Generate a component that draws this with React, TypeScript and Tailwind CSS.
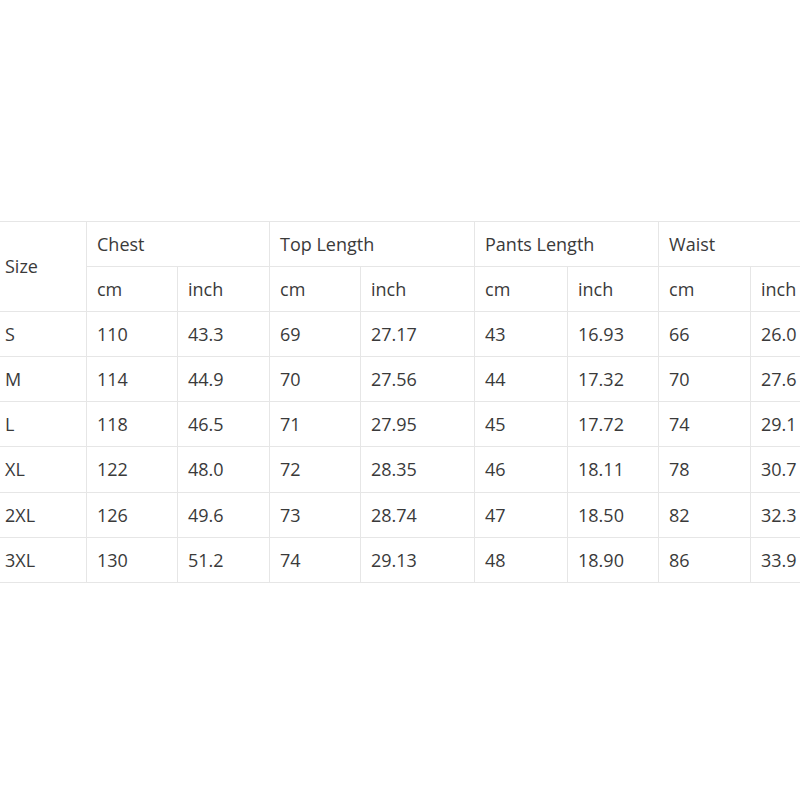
const GROUPS = ["Chest", "Top Length", "Pants Length", "Waist"];

const ROWS: string[][] = [
  ["S", "110", "43.3", "69", "27.17", "43", "16.93", "66", "26.0"],
  ["M", "114", "44.9", "70", "27.56", "44", "17.32", "70", "27.6"],
  ["L", "118", "46.5", "71", "27.95", "45", "17.72", "74", "29.1"],
  ["XL", "122", "48.0", "72", "28.35", "46", "18.11", "78", "30.7"],
  ["2XL", "126", "49.6", "73", "28.74", "47", "18.50", "82", "32.3"],
  ["3XL", "130", "51.2", "74", "29.13", "48", "18.90", "86", "33.9"],
];

const WIDTHS = [86, 91, 92, 91, 114, 93, 91, 92, 92];

export default function App() {
  const cell = "border border-[#e6e6e6] align-middle text-left";

  return (
    <div className="w-[800px] h-[800px] overflow-hidden bg-white pt-[221px] font-['Open_Sans',sans-serif] text-[18px] text-[#3a3a3a]">
      <table className="table-fixed border-collapse w-[842px] -ml-px">
        <colgroup>
          {WIDTHS.map((w, i) => (
            <col key={i} style={{ width: w + (i === 0 ? 1 : 0) }} />
          ))}
        </colgroup>
        <thead>
          <tr className="h-[45px]">
            <th rowSpan={2} className={`${cell} font-normal pl-[5px]`}>Size</th>
            {GROUPS.map(g => (
              <th key={g} colSpan={2} className={`${cell} font-normal pl-[10px]`}>{g}</th>
            ))}
          </tr>
          <tr className="h-[45px]">
            {GROUPS.flatMap(g => [
              <th key={g + "cm"} className={`${cell} font-normal pl-[10px]`}>cm</th>,
              <th key={g + "in"} className={`${cell} font-normal pl-[10px]`}>inch</th>,
            ])}
          </tr>
        </thead>
        <tbody>
          {ROWS.map(row => (
            <tr key={row[0]} className={row[0] === "XL" ? "h-[46px]" : "h-[45px]"}>
              {row.map((v, i) => (
                <td key={i} className={`${cell} ${i === 0 ? "pl-[5px]" : "pl-[10px]"}`}>{v}</td>
              ))}
            </tr>
          ))}
        </tbody>
      </table>
    </div>
  );
}
